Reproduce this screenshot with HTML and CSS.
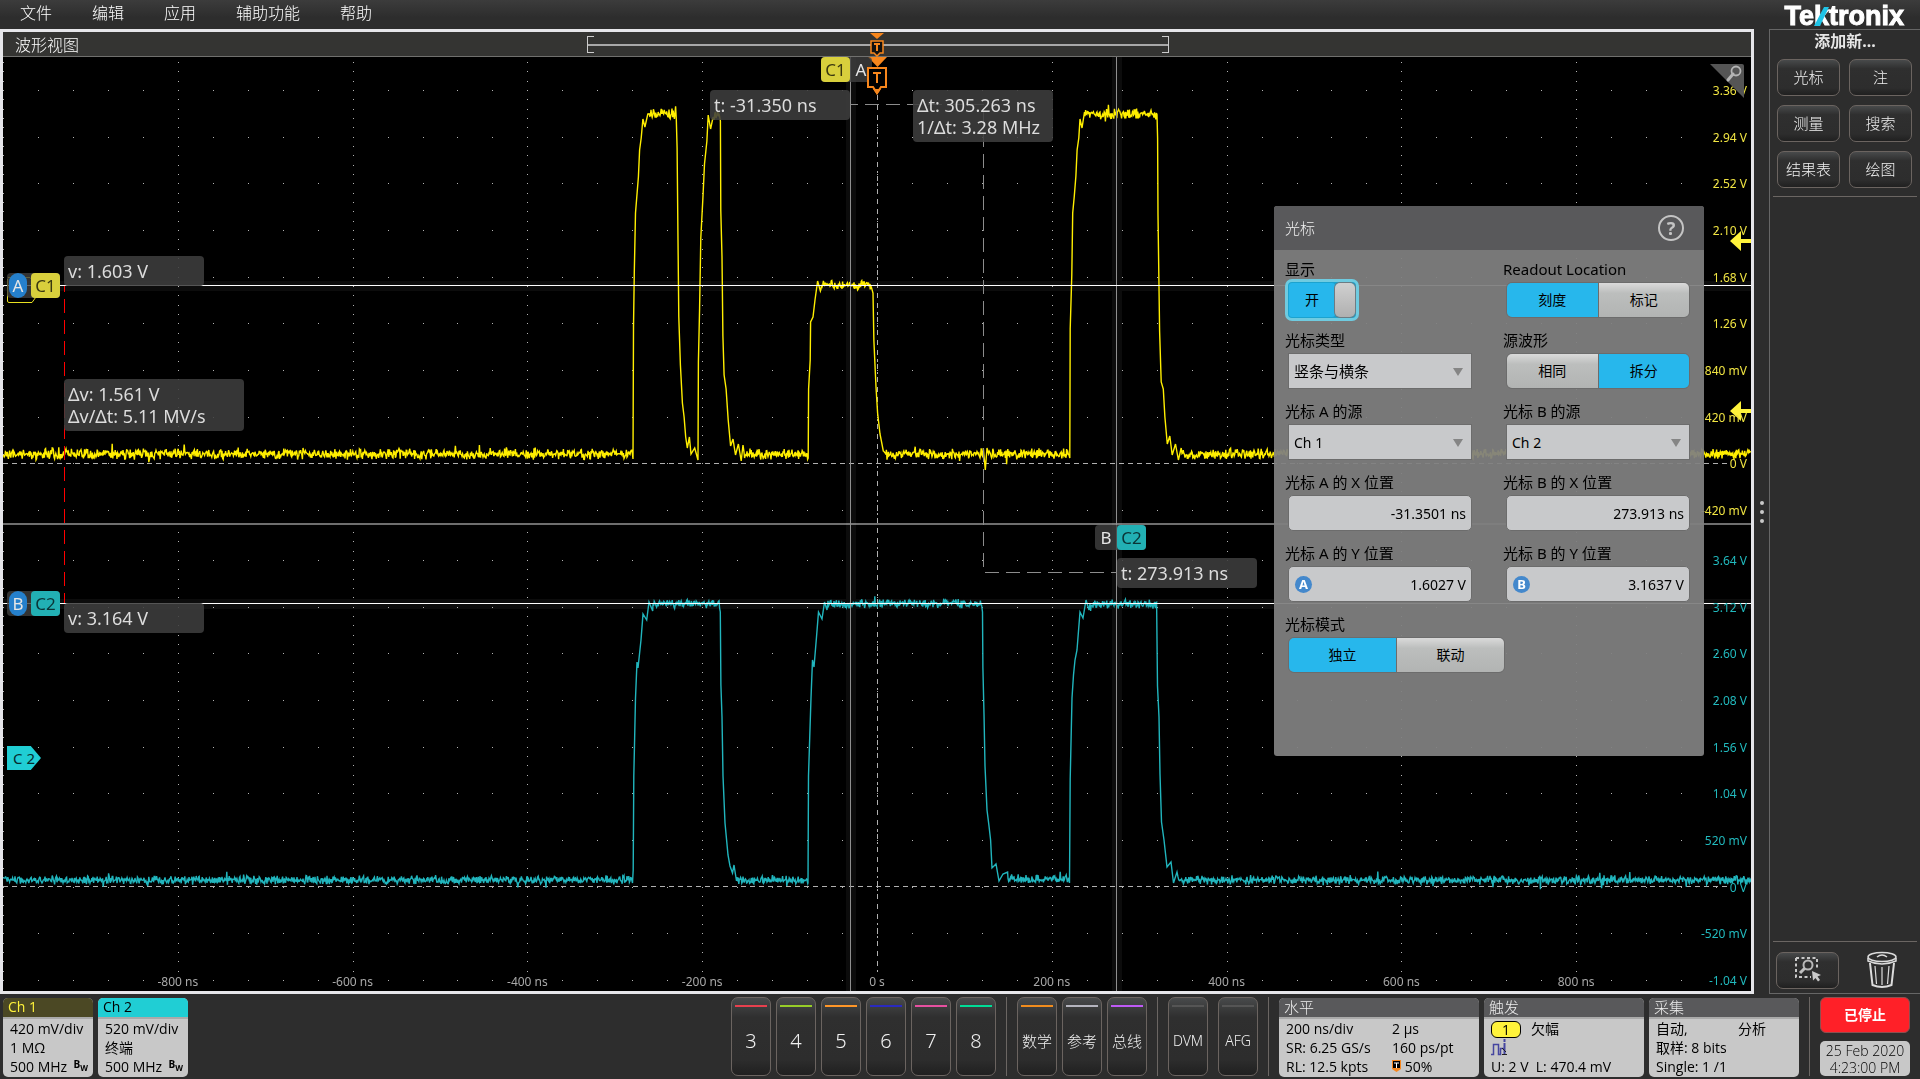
FILE: index.html
```html
<!DOCTYPE html>
<html lang="zh-CN">
<head>
    <meta charset="UTF-8">
    <meta name="viewport" content="width=device-width, initial-scale=1.0">
    <title>波形视图</title>
    <link rel="stylesheet" href="styles.css">
</head>
<body>

    <header class="menubar">
        <nav class="menu">
            <button type="button">文件</button>
            <button type="button">编辑</button>
            <button type="button">应用</button>
            <button type="button">辅助功能</button>
            <button type="button">帮助</button>
        </nav>
        <div class="logo">Tektronix
            <svg class="logo-slash" width="16" height="19" viewBox="0 0 16 19"><path d="M0 19 L10 0 H15 L6 19 Z" fill="#1fc3e6"/></svg>
        </div>
    </header>

    <main class="workspace">
        <section class="waveform">
            <div class="waveform-header">
                <span>波形视图</span>
                <div class="record-bar"></div>
                <svg class="record-trigger" width="14" height="24" viewBox="0 0 14 24">
                    <path d="M0 0 H14 L7 6 Z" fill="#f7861c"/>
                    <path d="M1 8 H13 V20 H10 L7 23 L4 20 H1 Z" fill="#111" stroke="#f7861c" stroke-width="1.5"/>
                    <path d="M4 11 H10 M7 11 V18" stroke="#f7861c" stroke-width="2"/>
                </svg>
            </div>

            <div class="plot" id="plot">
                <svg class="traces" viewBox="3 57 1748 934" preserveAspectRatio="none">
                    <g id="grid" fill="#b4b4b4" shape-rendering="crispEdges"></g>
                    <g fill="none" stroke="#b0b0b0" shape-rendering="crispEdges">
                        <path d="M3 463.5 H1728 M3 886.5 H1728" stroke-dasharray="5 4"/>
                        <path d="M877.5 95 V971" stroke-dasharray="5 5 5 5 5 4 2 3 5 3 2 3"/>
                    </g>
                    <path d="M3 524 H1751" stroke="#6e6e6e" stroke-width="2"/>
                    <g class="halo" fill="#0c0c0c">
                        <path d="M846 57 h10 v934 h-10 Z M1112 57 h10 v934 h-10 Z"/>
                        <path d="M3 281 h1748 v10 H3 Z M3 599 h1748 v10 H3 Z"/>
                    </g>
                    <path id="trace1" fill="none" stroke="#ffee00" stroke-width="1.4"/>
                    <path id="trace2" fill="none" stroke="#21b5bd" stroke-width="1.4"/>
                    <g fill="none" shape-rendering="crispEdges">
                        <path d="M850.5 57 V991 M1116.5 57 V991" stroke="#8f8f8f"/>
                        <path d="M3 285.5 H1751 M3 603.5 H1751" stroke="#fff"/>
                        <path d="M851 104.5 H983.5 V572.5 H1116" stroke="#8c8c8c" stroke-dasharray="14 7" stroke-dashoffset="7"/>
                        <path d="M64.5 286 V603" stroke="#f00" stroke-dasharray="14 7" stroke-dashoffset="8"/>
                    </g>
                    <path d="M8 277.5 H30 L41 290 L32 302.5 H9 Q7.500 302.500 7.500 301 V279" fill="none" stroke="#e8e020"/>
                    <g fill="#fff33b">
                        <path d="M1730 241 L1741 231 V239 H1751 V243 H1741 V251 Z"/>
                        <path d="M1730 411 L1741 401 V409 H1751 V413 H1741 V421 Z"/>
                    </g>
                    <path d="M868 57 H887 L877.500 67 Z" fill="#f7861c"/>
                </svg>

                <div class="axis" id="axis"></div>

                <svg class="zoom-corner" width="34" height="34" viewBox="0 0 34 34">
                    <path d="M0 0 H32 Q34 0 34 2 V34 Z" fill="#555"/>
                    <circle cx="26" cy="7" r="4.500" fill="none" stroke="#b5b5b5" stroke-width="1.800"/>
                    <path d="M23 10 L18 16" stroke="#b5b5b5" stroke-width="3" stroke-linecap="round"/>
                </svg>

                <div class="badge badge-va"><span class="pill">A</span><span class="chip c1">C1</span></div>
                <div class="badge badge-vb"><span class="pill">B</span><span class="chip c2">C2</span></div>
                <div class="badge badge-ta"><span class="chip c1">C1</span><span class="letter">A</span></div>
                <div class="badge badge-tb"><span class="letter">B</span><span class="chip c2">C2</span></div>
                <div class="position-c2">C 2</div>

                <svg class="trigger-point" width="20" height="28" viewBox="0 0 20 28">
                    <path d="M1 1 H19 V20 H14 L10 26 L6 20 H1 Z" fill="#000" stroke="#f7861c" stroke-width="2"/>
                    <path d="M6 22 H14 L10 28 Z" fill="#f7861c"/>
                    <path d="M6 6 H14 M10 6 V16" stroke="#f7861c" stroke-width="2"/>
                </svg>

                <div class="readout r-va">v: 1.603 V</div>
                <div class="readout r-vb">v: 3.164 V</div>
                <div class="readout r-dv">Δv: 1.561 V<br>Δv/Δt: 5.11 MV/s</div>
                <div class="readout r-ta">t: -31.350 ns</div>
                <div class="readout r-tb">t: 273.913 ns</div>
                <div class="readout r-dt">Δt: 305.263 ns<br>1/Δt: 3.28 MHz</div>
            </div>

            <form class="dialog">
                <div class="dialog-header">
                    <h2>光标</h2>
                    <button type="button" class="help">?</button>
                </div>
                <div class="dialog-body">
                    <div class="field">
                        <label for="show">显示</label>
                        <div class="toggle">
                            <input type="checkbox" id="show" checked>
                            <span class="toggle-on">开</span>
                            <span class="toggle-knob"></span>
                        </div>
                    </div>
                    <fieldset class="field">
                        <legend>Readout Location</legend>
                        <div class="segment">
                            <label><input type="radio" name="location" checked><span>刻度</span></label>
                            <label><input type="radio" name="location"><span>标记</span></label>
                        </div>
                    </fieldset>
                    <div class="field">
                        <label for="type">光标类型</label>
                        <div class="select"><select id="type"><option>竖条与横条</option></select></div>
                    </div>
                    <fieldset class="field">
                        <legend>源波形</legend>
                        <div class="segment">
                            <label><input type="radio" name="source"><span>相同</span></label>
                            <label><input type="radio" name="source" checked><span>拆分</span></label>
                        </div>
                    </fieldset>
                    <div class="field">
                        <label for="source-a">光标 A 的源</label>
                        <div class="select"><select id="source-a"><option>Ch 1</option></select></div>
                    </div>
                    <div class="field">
                        <label for="source-b">光标 B 的源</label>
                        <div class="select"><select id="source-b"><option>Ch 2</option></select></div>
                    </div>
                    <div class="field">
                        <label for="ax">光标 A 的 X 位置</label>
                        <div class="value"><input type="text" id="ax" value="-31.3501 ns"></div>
                    </div>
                    <div class="field">
                        <label for="bx">光标 B 的 X 位置</label>
                        <div class="value"><input type="text" id="bx" value="273.913 ns"></div>
                    </div>
                    <div class="field">
                        <label for="ay">光标 A 的 Y 位置</label>
                        <div class="value"><input type="text" id="ay" value="1.6027 V"><span class="knob">A</span></div>
                    </div>
                    <div class="field">
                        <label for="by">光标 B 的 Y 位置</label>
                        <div class="value"><input type="text" id="by" value="3.1637 V"><span class="knob">B</span></div>
                    </div>
                    <fieldset class="field wide">
                        <legend>光标模式</legend>
                        <div class="segment">
                            <label><input type="radio" name="mode" checked><span>独立</span></label>
                            <label><input type="radio" name="mode"><span>联动</span></label>
                        </div>
                    </fieldset>
                </div>
            </form>
        </section>

        <div class="splitter"><i></i><i></i><i></i></div>

        <aside class="sidebar">
            <h3>添加新...</h3>
            <div class="add-grid">
                <button type="button" class="btn">光标</button>
                <button type="button" class="btn">注</button>
                <button type="button" class="btn">测量</button>
                <button type="button" class="btn">搜索</button>
                <button type="button" class="btn">结果表</button>
                <button type="button" class="btn">绘图</button>
            </div>
            <div class="sidebar-bottom">
                <button type="button" class="btn" aria-label="缩放">
                    <svg width="27" height="26" viewBox="0 0 27 26">
                        <path d="M2 2 H23 V14 M2 2 V21 H17" fill="none" stroke="#c8c8c8" stroke-width="2" stroke-dasharray="3 2.500"/>
                        <circle cx="14" cy="9" r="4.500" fill="none" stroke="#b8b8b8" stroke-width="2"/>
                        <path d="M10.500 12.500 L6 17" stroke="#c0c0c0" stroke-width="3"/>
                        <path d="M18 15 L27 19 L23.500 20.500 L26 24 L24 25.500 L21.500 22 L19 24.500 Z" fill="#c8c8c8"/>
                    </svg>
                </button>
                <button type="button" class="trash" aria-label="删除">
                    <svg width="32" height="38" viewBox="0 0 32 38" fill="none" stroke="#dcdcdc" stroke-width="1.500">
                        <ellipse cx="16" cy="6" rx="14" ry="4.500"/>
                        <path d="M2 7 V10 Q16 16 30 10 V7 M11 6 Q16 2 21 6"/>
                        <path d="M4 12 L6.500 34 Q16 38 25.500 34 L28 12" stroke-width="2"/>
                        <path d="M9 15 L10.500 33 M16 16 V34 M23 15 L21.500 33" stroke-width="1.200"/>
                    </svg>
                </button>
            </div>
        </aside>
    </main>

    <footer class="settings">
        <div class="group">
            <div class="panel channel ch1">
                <h4>Ch 1</h4>
                <p>420 mV/div</p>
                <p>1 MΩ</p>
                <p>500 MHz <b>B<sub>W</sub></b></p>
            </div>
            <div class="panel channel ch2">
                <h4>Ch 2</h4>
                <p>520 mV/div</p>
                <p>终端</p>
                <p>500 MHz <b>B<sub>W</sub></b></p>
            </div>
        </div>

        <div class="group">
            <button type="button" class="btn tall num red">3</button>
            <button type="button" class="btn tall num green">4</button>
            <button type="button" class="btn tall num orange">5</button>
            <button type="button" class="btn tall num blue">6</button>
            <button type="button" class="btn tall num pink">7</button>
            <button type="button" class="btn tall num mint">8</button>
            <span class="divider"></span>
            <button type="button" class="btn tall math">数学</button>
            <button type="button" class="btn tall ref">参考</button>
            <button type="button" class="btn tall bus">总线</button>
            <span class="divider"></span>
            <button type="button" class="btn tall off dvm">DVM</button>
            <button type="button" class="btn tall off">AFG</button>
            <span class="divider"></span>

            <div class="panel horizontal">
                <h4>水平</h4>
                <p><span>200 ns/div</span><span>2 µs</span></p>
                <p><span>SR: 6.25 GS/s</span><span>160 ps/pt</span></p>
                <p><span>RL: 12.5 kpts</span><span><svg width="9" height="12" viewBox="0 0 9 12"><path d="M0 0 H9 V9 L4.500 12 L0 9 Z" fill="#f7861c"/><path d="M1 1 H8 V8 H1 Z" fill="#000"/><path d="M2 3 H7 M4.500 3 V8" stroke="#fff"/></svg> 50%</span></p>
            </div>
            <div class="panel trigger">
                <h4>触发</h4>
                <p><span class="source">1</span>欠幅</p>
                <p><svg width="18" height="18" viewBox="0 0 18 18" fill="none" stroke="#4646a0"><path d="M0 15.500 H2.500 V5.500 H7.500 V15.500 H9.500 V9.500 H13" stroke-width="1.500"/><path d="M13.500 0 V3 M13.500 4 V16" stroke-width="2"/><path d="M11 15.500 H16 M11 9 L15 13" stroke="#222"/></svg></p>
                <p>U: 2 V&nbsp; L: 470.4 mV</p>
            </div>
            <div class="panel acquisition">
                <h4>采集</h4>
                <p><span>自动,</span><span>分析</span></p>
                <p>取样: 8 bits</p>
                <p>Single: 1 /1</p>
            </div>
            <span class="divider"></span>
            <div class="status">
                <button type="button" class="stop">已停止</button>
                <div class="clock">25 Feb 2020<br>4:23:00 PM</div>
            </div>
        </div>
    </footer>

    <script src="scope.js"></script>
</body>
</html>
```

FILE: styles.css
```css
* {
    box-sizing: border-box;
}

body {
    margin: 0;
    height: 100vh;
    display: flex;
    flex-direction: column;
    background-color: #2d2d2d;
    color: #e6e6e6;
    font-family: "Noto Sans", "Noto Sans CJK SC", sans-serif;
    font-size: 14px;
    overflow: hidden;
}

h2, h3, h4, p, fieldset, legend {
    margin: 0;
    padding: 0;
    border: none;
    font-weight: normal;
}

button, input, select {
    font-family: inherit;
    color: inherit;
    margin: 0;
    padding: 0;
}

/* menu bar */
.menubar {
    height: 29px;
    display: flex;
    justify-content: space-between;
    padding: 0 16px 0 20px;
    background: linear-gradient(#3c3c3c, #2d2d2d 60%);
}

.menu {
    display: flex;
    align-items: flex-start;
    gap: 40px;
}

.menu button {
    background: none;
    border: none;
    font-size: 16px;
    font-weight: 300;
    line-height: 26px;
    color: #fff;
}

.logo {
    position: relative;
    font-family: "Liberation Sans", Arial, sans-serif;
    font-size: 27px;
    font-weight: bold;
    line-height: 32px;
    color: #fff;
    -webkit-text-stroke: 1px #fff;
}

.logo-slash {
    position: absolute;
    left: 30px;
    top: 7px;
}

/* waveform view */
.workspace {
    flex: 1;
    display: flex;
    min-height: 0;
}

.waveform {
    position: relative;
    flex: 1;
    display: flex;
    flex-direction: column;
    border: 3px solid #e6e6ea;
}

.waveform-header {
    position: relative;
    height: 25px;
    padding-left: 12px;
    background-color: #343432;
    border-bottom: 1px solid #70706e;
    font-size: 16px;
    font-weight: 300;
    line-height: 26px;
    color: #fff;
}

.record-bar {
    position: absolute;
    left: 33.4%;
    right: 33.3%;
    top: 4px;
    height: 17px;
    border-left: 1px solid #ccc;
    border-right: 1px solid #ccc;
    background:
        linear-gradient(#ccc, #ccc) 0 0 / 6px 1px no-repeat,
        linear-gradient(#ccc, #ccc) 100% 0 / 6px 1px no-repeat,
        linear-gradient(#ccc, #ccc) 0 100% / 6px 1px no-repeat,
        linear-gradient(#ccc, #ccc) 100% 100% / 6px 1px no-repeat,
        linear-gradient(#a8a8a8, #a8a8a8) 0 8px / 100% 2px no-repeat;
}

.record-trigger {
    position: absolute;
    left: calc(50% - 7px);
    top: 1px;
}

.plot {
    position: relative;
    flex: 1;
    background-color: #000;
    overflow: hidden;
}

.traces {
    position: absolute;
    width: 100%;
    height: 100%;
}

.halo {
    mix-blend-mode: screen;
}

.axis span {
    position: absolute;
    font-size: 12px;
    line-height: 16px;
    white-space: nowrap;
    transform: translateY(-50%);
}

.axis .volts {
    right: 4px;
    color: #f0e442;
}

.axis .lower {
    color: #21b9bd;
}

.axis .time {
    padding: 0 3px;
    background-color: #000;
    color: #a8a8a8;
    transform: translate(-50%, -50%);
}

.zoom-corner {
    position: absolute;
    right: 7px;
    top: 7px;
}

.badge {
    position: absolute;
    display: flex;
    height: 25px;
    border-radius: 4px;
    background-color: rgba(64, 64, 64, 0.8);
    font-size: 17px;
    line-height: 25px;
    text-align: center;
}

.pill {
    width: 18px;
    margin: 0 4px 0 2px;
    border-radius: 9px;
    background-color: #2580cc;
}

.chip {
    width: 29px;
    border-radius: 4px;
}

.letter {
    width: 22px;
}

.c1 {
    background-color: #d8cf3c;
    color: #3a3810;
}

.c2 {
    background-color: #22b0b4;
    color: #0a3436;
}

.badge-va { left: 4px; top: 216px; }
.badge-vb { left: 4px; top: 534px; }
.badge-ta { right: calc(50% + 5px); top: 0; }
.badge-tb { left: calc(50% + 218px); top: 468px; }

.position-c2 {
    position: absolute;
    left: 4px;
    top: 689px;
    width: 34px;
    padding-left: 6px;
    background-color: #20ced4;
    clip-path: polygon(0 0, 70% 0, 100% 50%, 70% 100%, 0 100%);
    font-size: 15px;
    line-height: 24px;
    color: #062c2e;
}

.trigger-point {
    position: absolute;
    left: calc(50% - 10px);
    top: 10px;
}

.readout {
    position: absolute;
    width: 140px;
    padding: 4px;
    border-radius: 4px;
    background-color: rgba(62, 62, 62, 0.88);
    font-size: 18px;
    line-height: 22px;
    color: #dcdcdc;
    white-space: nowrap;
}

.r-va { left: 61px; top: 199px; }
.r-vb { left: 61px; top: 546px; }
.r-dv { left: 61px; top: 322px; width: 180px; }
.r-ta { right: calc(50% + 27px); top: 33px; }
.r-tb { left: calc(50% + 240px); top: 501px; }
.r-dt { left: calc(50% + 36px); top: 33px; }

/* cursor settings dialog */
.dialog {
    position: absolute;
    right: 47px;
    top: 174px;
    width: 430px;
    border-radius: 3px;
    background-color: rgba(128, 128, 128, 0.94);
    color: #000;
    overflow: hidden;
}

.dialog-header {
    height: 44px;
    display: flex;
    align-items: center;
    justify-content: space-between;
    padding: 0 20px 0 11px;
    background-color: #59595b;
    color: #f0f0f0;
}

.dialog-header h2 {
    font-size: 15px;
    font-weight: 300;
    line-height: 18px;
}

.help {
    width: 26px;
    height: 26px;
    border: 2px solid #c4c4c4;
    border-radius: 13px;
    background: none;
    font-size: 18px;
    font-weight: bold;
    line-height: 20px;
    color: #c4c4c4;
}

.dialog-body {
    display: grid;
    grid-template-columns: 218px 189px;
    row-gap: 10px;
    padding: 8px 11px 82px;
}

.field > label,
.field > legend {
    display: block;
    height: 24px;
    font-size: 15px;
    line-height: 22px;
    white-space: nowrap;
}

.field {
    min-width: 0;
    padding-bottom: 1px;
}

.toggle {
    position: relative;
    display: flex;
    width: 74px;
    height: 42px;
    margin: -3px 0;
    padding: 2px;
    border: 3px solid #6fcbe0;
    border-radius: 7px;
    background-color: #1ba3cf;
}

.toggle input {
    position: absolute;
    inset: 0;
    width: 100%;
    height: 100%;
    opacity: 0;
}

.toggle-on {
    flex: 1;
    margin: -1px 1px -1px -1px;
    border-radius: 3px;
    background-color: #27b7ec;
    line-height: 34px;
    text-align: center;
}

.toggle-knob {
    width: 20px;
    margin: -1px;
    border-radius: 5px;
    background: linear-gradient(#d0d0d0, #b0b0b0);
    box-shadow: 0 0 0 1px #6c7c84;
}

.segment {
    display: flex;
    width: 184px;
    height: 36px;
    margin-left: 3px;
    border: 1px solid #6c6c6c;
    border-radius: 6px;
    overflow: hidden;
}

.field.wide {
    grid-column: span 2;
}

.field.wide .segment {
    width: 217px;
}

.segment label {
    position: relative;
    flex: 1;
    line-height: 34px;
    text-align: center;
}

.segment label + label {
    border-left: 1px solid #6c6c6c;
}

.segment input {
    position: absolute;
    opacity: 0;
}

.segment span {
    display: block;
    background: linear-gradient(#dadada, #bcbebd 30%, #b2b4b3);
}

.segment input:checked + span {
    background: #27b7ec;
}

.select,
.value {
    position: relative;
    width: 184px;
    margin-left: 3px;
}

.select select,
.value input {
    display: block;
    width: 100%;
    height: 36px;
    padding: 0 5px;
    border: 1px solid #6c6c6c;
    border-radius: 0;
    background-color: #c8c9cb;
    font-size: 14px;
    appearance: none;
}

#type {
    font-size: 15px;
}

.value input {
    border-radius: 5px;
    text-align: right;
}

.select::after {
    content: "";
    position: absolute;
    right: 9px;
    top: 15px;
    border: 5px solid transparent;
    border-top: 8px solid #858585;
    border-bottom: none;
}

.knob {
    position: absolute;
    left: 7px;
    top: 10px;
    width: 17px;
    height: 17px;
    border-radius: 9px;
    background-color: #4488cc;
    font-size: 13px;
    font-weight: bold;
    line-height: 17px;
    text-align: center;
    color: #fff;
}

/* right column */
.splitter {
    width: 15px;
    display: flex;
    flex-direction: column;
    align-items: center;
    justify-content: center;
    gap: 5px;
}

.splitter i {
    width: 4px;
    height: 4px;
    border-radius: 2px;
    background-color: #c8c8c8;
}

.sidebar {
    width: 151px;
    display: flex;
    flex-direction: column;
    padding: 0 3px;
    border: 1px solid #666;
    border-right: none;
}

.sidebar h3 {
    font-size: 16px;
    font-weight: bold;
    line-height: 22px;
    text-align: center;
}

.add-grid {
    display: grid;
    grid-template-columns: 1fr 1fr;
    gap: 9px;
    padding: 7px 5px 8px 4px;
    border-bottom: 1px solid #6b6663;
}

.sidebar-bottom {
    display: flex;
    align-items: center;
    justify-content: space-between;
    margin-top: auto;
    padding: 9px 19px 4px 3px;
    border-top: 1px solid #6b6663;
}

.btn {
    height: 37px;
    padding-bottom: 2px;
    border: 1px solid #6b6460;
    border-radius: 7px;
    background: linear-gradient(#484a4b, #2f2f2f 25%, #2d2d2d 80%, #202020);
    font-size: 15px;
    font-weight: 300;
    color: #f0f0f0;
}

.sidebar-bottom .btn {
    width: 63px;
    line-height: 0;
}

.trash {
    border: none;
    background: none;
    line-height: 0;
}

/* settings bar */
.settings {
    height: 85px;
    display: flex;
    justify-content: space-between;
    padding: 3px 10px 3px 3px;
}

.group {
    display: flex;
    gap: 5px;
}

.divider {
    width: 1px;
    margin: 0 5px;
    background-color: #6b6663;
}

.tall {
    position: relative;
    width: 40px;
    height: 79px;
    padding-top: 10px;
}

.tall.dvm {
    margin-right: 5px;
}

.tall.off {
    font-size: 14px;
}

.tall.num {
    font-size: 20px;
}

.tall::before {
    content: "";
    position: absolute;
    left: 3px;
    right: 3px;
    top: 7px;
    height: 2px;
    background-color: #555;
}

.red::before { background-color: #e8404e; }
.green::before { background-color: #96cc28; }
.orange::before { background-color: #ff9628; }
.blue::before { background-color: #2a2ac0; }
.pink::before { background-color: #e650a0; }
.mint::before { background-color: #00dc96; }
.math::before { background-color: #f08c1e; }
.ref::before { background-color: #b4b4be; }
.bus::before { background-color: #be5af5; }

.panel {
    height: 79px;
    margin-top: 1px;
    border-radius: 5px;
    background-color: #c8c8c8;
    font-family: "Open Sans", "Noto Sans CJK SC", sans-serif;
    font-weight: 300;
    font-size: 14px;
    color: #000;
    overflow: hidden;
}

.panel h4 {
    height: 21px;
    margin-bottom: 1px;
    padding-left: 5px;
    border-bottom: 2px solid #aaa;
    background-color: #59595b;
    font-size: 15px;
    font-weight: 300;
    line-height: 18px;
    color: #eee;
}

.panel p {
    display: flex;
    height: 19px;
    padding-left: 7px;
    line-height: 18px;
    white-space: nowrap;
}

.channel {
    width: 90px;
}

.channel h4 {
    font-size: 14px;
    font-weight: 400;
}

.channel b {
    margin-left: auto;
    padding-right: 5px;
    font-size: 10px;
    line-height: 12px;
}

.channel sub {
    font-size: 8px;
    line-height: 8px;
}

.ch1 h4 {
    background-color: #4b4824;
    color: #fff33b;
}

.ch2 h4 {
    background-color: #20ced4;
    color: #000;
}

.horizontal {
    width: 200px;
}

.horizontal p span:first-child {
    width: 106px;
}

.trigger {
    width: 160px;
}

.source {
    width: 30px;
    height: 17px;
    margin: 1px 10px 0 0;
    border: 1px solid #000;
    border-radius: 6px;
    background-color: #fff33b;
    line-height: 15px;
    text-align: center;
}

.acquisition {
    width: 150px;
}

.acquisition p span:first-child {
    width: 82px;
}

.status {
    width: 90px;
    display: flex;
    flex-direction: column;
    gap: 8px;
}

.stop {
    height: 36px;
    padding-bottom: 2px;
    border: 1px solid #8c5050;
    border-radius: 6px;
    background-color: #ff2028;
    font-size: 14px;
    font-weight: bold;
    color: #fff;
}

.clock {
    flex: 1;
    padding-top: 1px;
    border-radius: 5px;
    background-color: #c8c8c8;
    font-family: "Open Sans", sans-serif;
    font-weight: 300;
    line-height: 17px;
    text-align: center;
    color: #000;
}
```

FILE: scope.js
```javascript
// plot area: 10 x 10 divisions per channel, 5 minor ticks per division
const LEFT = 3, TOP = 57, WIDTH = 1748, HEIGHT = 934;
const DIV_X = 174.8, DIV_Y = 46.65;

const dots = [];
function dot(x, y) {
    dots.push(`<rect x="${Math.round(x)}" y="${Math.round(y)}" width="1" height="1"/>`);
}

[90, 560].forEach(function (first) {
    for (let row = 0; row < 10; row++) {
        const y = first + row * DIV_Y;
        for (let i = 0; i < 50; i++) {
            dot(LEFT + i * DIV_X / 5, y);
        }
    }
    for (let i = -3; i < 46; i++) {
        for (let col = 0; col < 10; col++) {
            dot(LEFT + col * DIV_X, first + i * DIV_Y / 5);
        }
    }
});
document.getElementById("grid").innerHTML = dots.join("");

// axis labels
const axis = document.getElementById("axis");
function label(text, cls, x, y) {
    const span = document.createElement("span");
    span.textContent = text;
    span.className = cls;
    span.style.top = (y - TOP) / HEIGHT * 100 + "%";
    if (x !== null) {
        span.style.left = (x - LEFT) / WIDTH * 100 + "%";
    }
    axis.appendChild(span);
}

["3.36 V", "2.94 V", "2.52 V", "2.10 V", "1.68 V", "1.26 V", "840 mV", "420 mV", "0 V", "-420 mV"]
    .forEach((text, i) => label(text, "volts", null, 91 + i * DIV_Y));
["3.64 V", "3.12 V", "2.60 V", "2.08 V", "1.56 V", "1.04 V", "520 mV", "0 V", "-520 mV", "-1.04 V"]
    .forEach((text, i) => label(text, "volts lower", null, 561 + i * DIV_Y));
["-800 ns", "-600 ns", "-400 ns", "-200 ns", "0 s", "200 ns", "400 ns", "600 ns", "800 ns"]
    .forEach((text, i) => label(text, "time", LEFT + (i + 1) * DIV_X, 982));

// waveforms: edge points, and flat noisy runs given as [from, to, level]
let seed = 7;
function rand() {
    seed = (seed * 16807) % 2147483647;
    return seed / 2147483647;
}

function draw(id, parts, amp) {
    const pts = [];
    parts.forEach(function (p) {
        if (p.length === 2) {
            pts.push(p);
            return;
        }
        for (let x = p[0]; x < p[1]; x += 0.6) {
            const spike = rand() > 0.97 ? 2 : 1;
            pts.push([x.toFixed(1), (p[2] + (rand() + rand() - 1) * amp * spike).toFixed(1)]);
        }
    });
    document.getElementById(id).setAttribute("d", "M" + pts.map(p => p.join(" ")).join(" L"));
}

draw("trace1", [
    [3, 633, 454],
    [633, 459], [633.5, 327], [634.3, 272], [635.5, 213], [636.7, 198], [638.4, 177], [639.6, 150],
    [641.2, 138], [642.9, 119], [644.9, 127], [647.8, 114],
    [648, 676, 114],
    [676.3, 119], [677.1, 148], [678, 240], [678.8, 317], [680.4, 365], [682.4, 403], [684.1, 417],
    [685.7, 437], [687.3, 448], [689.4, 437], [691, 454], [694.7, 448], [698, 460],
    [698.4, 362], [699.6, 308], [700.8, 238], [702.9, 198], [704.5, 164], [706.9, 141], [708.2, 115],
    [710.6, 129], [712.7, 119],
    [713, 720, 116],
    [720.4, 121], [720.8, 211], [722, 257], [722.9, 336], [724.1, 375], [726.1, 389], [728.2, 420],
    [730.6, 446], [733, 439], [735.5, 455], [738.4, 444], [741.2, 461], [743, 445],
    [744, 808, 454],
    [808.2, 458], [808.6, 389], [810.2, 360], [810.6, 322], [813, 317], [815, 300], [817.6, 281], [820.4, 291],
    [821, 872, 285],
    [873, 293], [873.9, 341], [876, 387], [877.6, 413], [880, 434], [883.3, 451],
    [884, 983, 454],
    [983.3, 448], [985.3, 470], [987, 448],
    [988, 1069, 454],
    [1069.8, 458], [1070.2, 329], [1071.8, 275], [1072.7, 213], [1074.3, 196], [1075.9, 176], [1077.1, 150],
    [1078.8, 138], [1080, 119], [1082, 128], [1084.5, 112],
    [1085, 1157, 114],
    [1157.6, 138], [1158, 215], [1159.6, 331], [1161.2, 382], [1163.3, 389], [1164.9, 417], [1167.3, 444],
    [1169.8, 436], [1172.2, 455], [1175.5, 444], [1178.4, 460], [1181.2, 448],
    [1182, 1751, 454]
], 6);

draw("trace2", [
    [3, 632, 880],
    [632.5, 883], [633.2, 870], [633.8, 776], [634.6, 740], [635.5, 698], [637, 662], [638, 668],
    [641, 640], [643, 614], [646.7, 620], [649, 602], [652.7, 611],
    [653, 720, 604],
    [720.3, 612], [720.9, 685], [722, 717], [723, 776], [725, 823], [728, 855], [730, 866],
    [732.5, 873], [734, 865], [736.5, 881],
    [737, 808, 880],
    [808, 883], [808.5, 776], [809.8, 735], [811, 698], [812.5, 660], [814, 667], [816.5, 637],
    [818.5, 612], [822, 619], [824.5, 602], [827, 610],
    [828, 982, 604],
    [982.5, 612], [982.9, 668], [984, 714], [985, 766], [987, 810], [989, 826], [990.6, 840],
    [992, 868], [996, 864], [999, 881], [1003, 874], [1007.6, 872],
    [1008, 1069, 879],
    [1069.5, 883], [1070.2, 779], [1072, 698], [1073.5, 675], [1075, 660], [1077, 650], [1080, 612],
    [1083, 618], [1086, 600], [1089, 610],
    [1090, 1157, 604],
    [1157.5, 686], [1159, 717], [1160, 774], [1161.5, 822], [1164, 840], [1167, 867], [1171, 862],
    [1173.5, 883], [1177, 872],
    [1178, 1751, 880]
], 5);
```
